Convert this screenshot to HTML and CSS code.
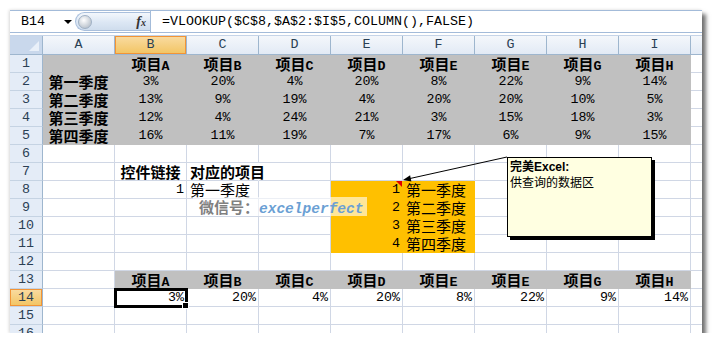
FILE: index.html
```html
<!DOCTYPE html>
<html lang="zh-CN">
<head>
    <meta charset="UTF-8">
    <meta name="viewport" content="width=device-width, initial-scale=1.0">
    <title>VLOOKUP 季度查询</title>
    <link rel="stylesheet" href="styles.css">
</head>
<body>

    <div class="window">
        <div class="formula-bar">
            <div class="name-box">B14</div>
            <div class="name-drop"><span class="caret"></span></div>
            <div class="fx-pill">
                <span class="knob"></span>
                <span class="fx">f<small>x</small></span>
            </div>
            <div class="formula">=VLOOKUP($C$8,$A$2:$I$5,COLUMN(),FALSE)</div>
        </div>

        <div class="sheet" id="sheet"></div>

        <div class="watermark">
            <span class="wm-label">微信号：</span><span class="wm-id">excelperfect</span>
        </div>

        <svg class="arrow" width="692" height="323">
            <line x1="497" y1="147" x2="400" y2="168.5" stroke="#000" stroke-width="1"/>
            <polygon points="393,170 401.4,171.4 400.1,165.2" fill="#000"/>
        </svg>

        <div class="comment">
            <div class="comment-author">完美Excel:</div>
            <div>供查询的数据区</div>
        </div>
    </div>

    <script>
        const letters = ['A', 'B', 'C', 'D', 'E', 'F', 'G', 'H', 'I', 'J'];
        const items = ['A', 'B', 'C', 'D', 'E', 'E', 'G', 'H'];
        const quarters = ['第一季度', '第二季度', '第三季度', '第四季度'];
        const data = [
            [3, 20, 4, 20, 8, 22, 9, 14],
            [13, 9, 19, 4, 20, 20, 10, 5],
            [12, 4, 24, 21, 3, 15, 18, 3],
            [16, 11, 19, 7, 17, 6, 9, 15]
        ];

        const cells = {};

        function put(ref, html, cls) {
            cells[ref] = { html: html, cls: cls };
        }

        function itemLabel(i) {
            return '项目<span class="lt">' + items[i] + '</span>';
        }

        put('A1', '', 'g');
        items.forEach((_, i) => {
            put(letters[i + 1] + '1', itemLabel(i), 'g b');
            put(letters[i + 1] + '13', itemLabel(i), 'g b');
            put(letters[i + 1] + '14', data[0][i] + '%', 'n r');
        });
        quarters.forEach((q, r) => {
            put('A' + (r + 2), q, 'g b');
            data[r].forEach((v, i) => put(letters[i + 1] + (r + 2), v + '%', 'g n'));
            put('E' + (r + 8), r + 1, 'o n r');
            put('F' + (r + 8), q, 'o l');
        });
        put('B7', '控件链接', 'b');
        put('C7', '对应的项目', 'b l over');
        put('B8', 1, 'n r');
        put('C8', '第一季度', 'l');
        cells.E8.cls += ' note';
        cells.B14.cls += ' sel';

        function renderSheet() {
            let html = '<div class="corner"></div>';
            letters.forEach(l => {
                html += `<div class="col-head${l === 'B' ? ' active' : ''}">${l === 'J' ? '' : l}</div>`;
            });
            for (let r = 1; r <= 16; r++) {
                html += `<div class="row-head${r === 14 ? ' active' : ''}">${r}</div>`;
                letters.forEach(l => {
                    const c = cells[l + r] || { html: '', cls: '' };
                    html += `<div class="cell ${c.cls}">${c.html}</div>`;
                });
            }
            document.getElementById('sheet').innerHTML = html;
        }

        renderSheet();
    </script>

</body>
</html>
```

FILE: styles.css
```css
:root {
    --grid-line: #d0d7e5;
    --head-line: #9eb6ce;
    --head-text: #2a3f54;
    --gray-fill: #c0c0c0;
    --orange-fill: #ffc000;
    --active-line: #f29436;
}
body {
    margin: 0;
    background: #fff;
}
.window {
    position: relative;
    margin: 10px 0 0 10px;
    width: 692px;
    height: 323px;
    overflow: hidden;
    background: #fff;
    box-shadow: 4px 4px 4px rgba(0, 0, 0, 0.55), -1px 0 3px rgba(0, 0, 0, 0.15);
}

/* formula bar */
.formula-bar {
    display: flex;
    height: 23px;
    box-sizing: border-box;
    border-top: 1px solid #a3bbd9;
    border-bottom: 1px solid #a3bbd9;
    font: 13.33px/21px "Liberation Mono", monospace;
    color: #000;
}
.name-box {
    width: 50px;
    padding-left: 11px;
    box-sizing: border-box;
}
.name-drop {
    width: 15px;
    display: flex;
    align-items: center;
    justify-content: center;
}
.caret {
    width: 0;
    height: 0;
    border-left: 4px solid transparent;
    border-right: 4px solid transparent;
    border-top: 4px solid #000;
}
.fx-pill {
    display: flex;
    align-items: center;
    justify-content: space-between;
    width: 75px;
    height: 19px;
    margin-top: 1px;
    padding: 0 4px 0 2px;
    box-sizing: border-box;
    border: 1px solid #a9bfdc;
    border-right: none;
    border-radius: 10px 0 0 10px;
    background: linear-gradient(#f3f7fc, #dce7f4 55%, #cfdded);
}
.knob {
    width: 12px;
    height: 12px;
    border-radius: 50%;
    border: 1px solid #9fb0c4;
    background: radial-gradient(circle at 40% 35%, #fff, #c9d0d8 60%, #a9b3bf);
}
.fx {
    font: italic bold 14px/1 "Liberation Serif", serif;
    color: #333;
}
.fx small {
    font-size: 10px;
}
.formula {
    flex: 1;
    padding-left: 11px;
    border-left: 1px solid #a3bbd9;
    background: #fff;
}

/* grid */
.sheet {
    display: grid;
    grid-template-columns: 33px repeat(10, 72px);
    grid-template-rows: 19px;
    grid-auto-rows: 18px;
    margin-top: 2px;
    border-top: 1px solid #c5d4e8;
}
.corner {
    position: relative;
    background: #c9d8ec;
    border-right: 1px solid var(--head-line);
    border-bottom: 1px solid var(--head-line);
}
.corner::after {
    content: '';
    position: absolute;
    right: 3px;
    bottom: 3px;
    border-left: 10px solid transparent;
    border-bottom: 10px solid #e9f0f9;
}
.col-head {
    background: linear-gradient(#f4f7fb, #e2eaf5);
    border-right: 1px solid var(--head-line);
    border-bottom: 1px solid var(--head-line);
    font: 13.33px/18px "Liberation Mono", monospace;
    color: var(--head-text);
    text-align: center;
}
.row-head {
    background: #e4ecf7;
    border-right: 1px solid var(--head-line);
    border-bottom: 1px solid #c5d3e3;
    font: 13.33px/17px "Liberation Mono", monospace;
    color: var(--head-text);
    text-align: center;
}
.col-head.active,
.row-head.active {
    background: linear-gradient(#f9dca3, #f2c462);
    box-shadow: inset 0 0 0 1px var(--active-line);
}
.cell {
    padding: 0 2px;
    border-right: 1px solid var(--grid-line);
    border-bottom: 1px solid var(--grid-line);
    font: 15px/17px "Noto Sans CJK SC", sans-serif;
    color: #000;
    text-align: center;
    white-space: nowrap;
}
.g {
    background: var(--gray-fill);
    border-color: var(--gray-fill);
}
.o {
    background: var(--orange-fill);
    border-color: var(--orange-fill);
}
.b {
    font-weight: 700;
}
.n {
    font-family: "Liberation Mono", monospace;
    font-size: 13.33px;
}
.lt {
    font-family: "Liberation Mono", monospace;
    font-size: 13.33px;
    font-weight: 700;
}
.l {
    text-align: left;
    padding-left: 3px;
}
.r {
    text-align: right;
}
.over {
    z-index: 1;
    border-right-color: #fff;
}
.note {
    position: relative;
}
.note::after {
    content: '';
    position: absolute;
    top: 0;
    right: 0;
    border-left: 6px solid transparent;
    border-top: 6px solid #e00000;
}
.sel {
    position: relative;
    z-index: 2;
    outline: 3px solid #000;
    outline-offset: -2px;
}
.sel::after {
    content: '';
    position: absolute;
    right: -3px;
    bottom: -3px;
    width: 5px;
    height: 5px;
    background: #000;
    border: 1px solid #fff;
}

/* overlays */
.watermark {
    position: absolute;
    left: 183px;
    top: 187px;
    width: 174px;
    height: 19px;
    padding-left: 6px;
    box-sizing: border-box;
    background: rgba(255, 255, 255, 0.6);
    white-space: nowrap;
    z-index: 3;
}
.wm-label {
    font: 700 15px/19px "Noto Sans CJK SC", sans-serif;
    color: #808080;
}
.wm-id {
    font: italic 700 14.5px/19px "Liberation Mono", monospace;
    color: #6a9fd4;
}
.arrow {
    position: absolute;
    left: 0;
    top: 0;
    pointer-events: none;
    z-index: 4;
}
.comment {
    position: absolute;
    left: 497px;
    top: 147px;
    width: 145px;
    height: 80px;
    box-sizing: border-box;
    padding: 1px 2px;
    border: 1px solid #000;
    background: #ffffe1;
    box-shadow: 3px 3px 0 #000;
    font: 12px/16px "Liberation Sans", "Noto Sans CJK SC", sans-serif;
    color: #000;
    z-index: 5;
}
.comment-author {
    font-weight: 700;
}
```
